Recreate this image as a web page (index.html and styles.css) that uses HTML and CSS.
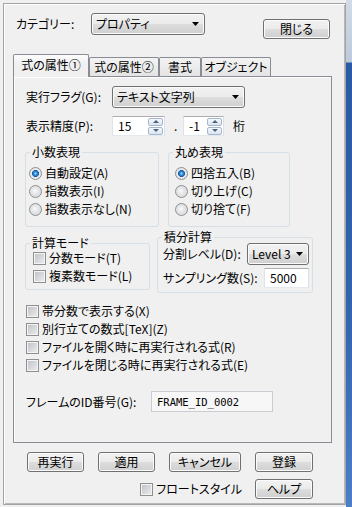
FILE: index.html
```html
<!DOCTYPE html>
<html>
<head>
    <title>式の属性</title>
    <link rel="stylesheet" href="styles.css">
</head>
<body>
    <div class="dialog">
        <div class="top-row">
            <span class="label cat-label">カテゴリー:</span>
            <div class="combo cat-combo">プロパティ<svg class="arrow" width="7" height="4"><path d="M0 0h7L3.5 4z"/></svg></div>
            <button class="btn close-btn">閉じる</button>
        </div>

        <div class="tabs">
            <div class="tab active">式の属性①</div>
            <div class="tab t2">式の属性②</div>
            <div class="tab t3">書式</div>
            <div class="tab t4">オブジェクト</div>
        </div>

        <div class="panel">
            <div class="row row-flag">
                <span class="label w86">実行フラグ(G):</span>
                <div class="combo flag-combo">テキスト文字列<svg class="arrow" width="7" height="4"><path d="M0 0h7L3.5 4z"/></svg></div>
            </div>

            <div class="row row-prec">
                <span class="label w86">表示精度(P):</span>
                <div class="textbox spin">
                    <span>15</span>
                    <span class="spin-btns"><span class="up"></span><span class="down"></span></span>
                </div>
                <span class="dot">.</span>
                <div class="textbox spin spin-small">
                    <span>-1</span>
                    <span class="spin-btns"><span class="up"></span><span class="down"></span></span>
                </div>
                <span class="unit">桁</span>
            </div>

            <div class="groups groups-1">
                <fieldset class="group g-dec">
                    <legend>小数表現</legend>
                    <div class="opts">
                        <label class="opt"><span class="radio on"></span>自動設定(A)</label>
                        <label class="opt"><span class="radio"></span>指数表示(I)</label>
                        <label class="opt"><span class="radio"></span>指数表示なし(N)</label>
                    </div>
                </fieldset>
                <fieldset class="group g-rnd">
                    <legend>丸め表現</legend>
                    <div class="opts">
                        <label class="opt"><span class="radio on"></span>四捨五入(B)</label>
                        <label class="opt"><span class="radio"></span>切り上げ(C)</label>
                        <label class="opt"><span class="radio"></span>切り捨て(F)</label>
                    </div>
                </fieldset>
            </div>

            <div class="groups groups-2">
                <fieldset class="group g-calc">
                    <legend>計算モード</legend>
                    <div class="opts">
                        <label class="opt"><span class="check"></span>分数モード(T)</label>
                        <label class="opt"><span class="check"></span>複素数モード(L)</label>
                    </div>
                </fieldset>
                <fieldset class="group g-int">
                    <legend>積分計算</legend>
                    <div class="int-body">
                        <div class="int-row">
                            <span>分割レベル(D):</span>
                            <div class="combo level-combo">Level 3<svg class="arrow" width="7" height="4"><path d="M0 0h7L3.5 4z"/></svg></div>
                        </div>
                        <div class="int-row int-row-2">
                            <span>サンプリング数(S):</span>
                            <div class="textbox sample-box">5000</div>
                        </div>
                    </div>
                </fieldset>
            </div>

            <div class="checks">
                <label class="opt"><span class="check"></span>帯分数で表示する(X)</label>
                <label class="opt"><span class="check"></span>別行立ての数式[TeX](Z)</label>
                <label class="opt"><span class="check"></span>ファイルを開く時に再実行される式(R)</label>
                <label class="opt"><span class="check"></span>ファイルを閉じる時に再実行される式(E)</label>
            </div>

            <div class="row row-id">
                <span class="label w125">フレームのID番号(G):</span>
                <div class="textbox id-box">FRAME_ID_0002</div>
            </div>
        </div>

        <div class="actions">
            <div class="act-row">
                <button class="btn b57">再実行</button>
                <button class="btn b57">適用</button>
                <button class="btn b72">キャンセル</button>
                <button class="btn b58">登録</button>
            </div>
            <div class="act-row act-row-2">
                <label class="opt"><span class="check"></span>フロートスタイル</label>
                <button class="btn b58">ヘルプ</button>
            </div>
        </div>
    </div>
    <div class="edge"></div>
</body>
</html>
```

FILE: styles.css
```css
body {
    margin: 0;
    width: 352px;
    height: 507px;
    overflow: hidden;
    display: flex;
    background: #f0f0f0;
    font-family: "Noto Sans CJK JP", "Noto Sans", sans-serif;
    font-feature-settings: "palt";
    font-size: 12px;
    line-height: 14px;
    color: #000;
}

.dialog {
    box-sizing: border-box;
    width: 343px;
    height: 502px;
    margin: 3px 0 0 3px;
    border: 1px solid #a4a4a4;
    box-shadow: inset 1px 1px 0 #fff, inset -1px -1px 0 #b8b8b8;
}

.edge {
    width: 6px;
    height: 507px;
    background: linear-gradient(to bottom, #d2dbe7 0, #bccadc 62px, #2a5aa6 63px, #3263ae 300px, #4a7fc6 100%);
}

.label {
    display: flex;
    align-items: center;
    flex-shrink: 0;
}

/* top row */
.top-row {
    display: flex;
    align-items: flex-start;
    padding: 9px 15px 0 12px;
}

.cat-label {
    width: 75px;
    height: 22px;
}

.cat-combo {
    width: 114px;
}

.close-btn {
    margin-left: auto;
    margin-top: 6px;
    width: 67px;
    height: 19px;
}

/* controls */
.btn,
.combo {
    box-sizing: border-box;
    border: 1px solid #707070;
    border-radius: 3px;
    background: linear-gradient(#f2f2f2 0%, #ebebeb 48%, #dddddd 52%, #cfcfcf 100%);
    box-shadow: inset 0 0 0 1px #fbfbfb;
    font: inherit;
    color: #000;
    padding: 0;
}

.btn {
    height: 20px;
    text-align: center;
}

.combo {
    height: 22px;
    display: flex;
    align-items: center;
    justify-content: space-between;
    padding: 0 5px 0 4px;
    flex-shrink: 0;
}

.arrow {
    fill: #000;
}

.textbox {
    box-sizing: border-box;
    border: 1px solid;
    border-color: #abadb3 #dbdfe6 #e3e9ef #e2e3ea;
    background: #fff;
    display: flex;
    align-items: center;
    padding: 0 5px;
    flex-shrink: 0;
}

.spin {
    width: 53px;
    height: 20px;
    justify-content: space-between;
    padding: 0 1px 0 5px;
}

.spin-small {
    width: 41px;
}

.spin-btns {
    display: flex;
    flex-direction: column;
    gap: 1px;
}

.spin-btns span {
    box-sizing: border-box;
    width: 15px;
    height: 8px;
    border: 1px solid #a6b6cb;
    border-radius: 2px;
    background: linear-gradient(#f4f8fc, #d9e5f2);
    display: flex;
    align-items: center;
    justify-content: center;
}

.spin-btns .up::after,
.spin-btns .down::after {
    content: "";
    border-left: 3px solid transparent;
    border-right: 3px solid transparent;
}

.spin-btns .up::after {
    border-bottom: 3px solid #4d5f7c;
}

.spin-btns .down::after {
    border-top: 3px solid #4d5f7c;
}

.radio,
.check {
    box-sizing: border-box;
    width: 13px;
    height: 13px;
    flex-shrink: 0;
    border: 1px solid #8e8f8f;
}

.radio {
    border-radius: 50%;
    background: radial-gradient(circle at 45% 45%, #fcfcfc 0, #e6e7e9 3px, #d2d4d8 100%);
}

.radio.on {
    background: radial-gradient(circle, #9fdcff 0, #3396de 1.5px, #1d5aa3 3.2px, #eceef1 3.8px, #d2d4d8 100%);
}

.check {
    background: linear-gradient(135deg, #bcc0c6, #eeeeef);
    box-shadow: inset 0 0 0 1px #f4f4f4;
}

/* tabs */
.tabs {
    display: flex;
    align-items: flex-end;
    height: 22px;
    margin: 15px 0 0 9px;
}

.tab {
    box-sizing: border-box;
    height: 19px;
    border: 1px solid #898c95;
    border-bottom: none;
    border-radius: 2px 2px 0 0;
    background: linear-gradient(#f3f3f3, #e4e4e4);
    display: flex;
    align-items: center;
    justify-content: center;
}

.tab.active {
    position: relative;
    z-index: 1;
    width: 76px;
    height: 23px;
    margin-bottom: -1px;
    padding-bottom: 2px;
    background: linear-gradient(#fdfdfd, #f0f0f0 8px);
}

.t2 { width: 70px; }
.t3 { width: 42px; }
.t4 { width: 70px; }

.panel {
    box-sizing: border-box;
    width: 319px;
    height: 367px;
    margin-left: 9px;
    border: 1px solid #898c95;
    box-shadow: inset 1px 1px 0 #fff;
}

.row {
    display: flex;
    align-items: center;
    padding-left: 12px;
}

.w86 { width: 86px; }
.w125 { width: 125px; }

.row-flag {
    margin-top: 9px;
    height: 22px;
}

.flag-combo {
    width: 133px;
}

.row-prec {
    margin-top: 8px;
    height: 20px;
}

.dot {
    width: 18px;
    padding-left: 9px;
    box-sizing: border-box;
}

.unit {
    margin-left: 9px;
}

/* group boxes */
.groups {
    display: flex;
    align-items: flex-start;
    margin-left: 11px;
}

.groups-1 {
    margin-top: 10px;
    gap: 9px;
}

.groups-2 {
    margin-top: 4px;
    gap: 7px;
}

.group {
    box-sizing: border-box;
    margin: 0;
    padding: 0;
    min-width: 0;
    border: 1px solid #d5dfe5;
    border-radius: 3px;
}

.group legend {
    padding: 0 2px;
    margin-left: 4px;
    line-height: 12px;
}

.opt {
    display: flex;
    align-items: center;
    gap: 3px;
    height: 18px;
    white-space: nowrap;
}

.g-dec { width: 134px; }
.g-rnd { width: 122px; }

.g-dec .opts { padding: 6px 0 8px 3px; }
.g-rnd .opts { padding: 6px 0 8px 6px; }

.g-calc {
    width: 125px;
    margin-top: 6px;
}

.g-calc .opts { padding: 0 0 4px 7px; }

.g-int { width: 156px; }

.int-body {
    padding: 0 3px 4px 5px;
}

.int-row {
    display: flex;
    align-items: center;
    justify-content: space-between;
    height: 22px;
    white-space: nowrap;
}

.int-row-2 {
    margin-top: 3px;
    height: 20px;
}

.level-combo {
    width: 62px;
}

.sample-box {
    width: 45px;
    height: 20px;
}

/* check list */
.checks {
    margin-top: 9px;
    padding-left: 12px;
}

.row-id {
    margin-top: 17px;
    height: 21px;
}

.id-box {
    width: 122px;
    height: 21px;
    background: #f7f7f7;
    border-color: #c9ccd1;
    font-family: "DejaVu Sans Mono", monospace;
    font-size: 10.5px;
}

/* bottom buttons */
.actions {
    width: 286px;
    margin: 9px 0 0 23px;
}

.act-row {
    display: flex;
    justify-content: space-between;
    align-items: center;
}

.act-row-2 {
    margin-top: 7px;
    justify-content: flex-end;
    gap: 13px;
}

.b57 { width: 57px; }
.b58 { width: 58px; }
.b72 { width: 72px; }
```
